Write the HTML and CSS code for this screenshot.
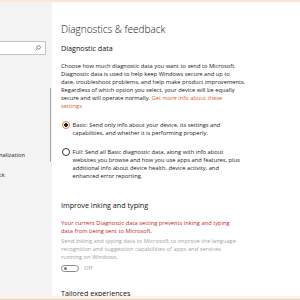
FILE: index.html
```html
<!DOCTYPE html>
<html lang="en">
<head>
    <meta charset="UTF-8">
    <title>Diagnostics &amp; feedback</title>
    <link rel="stylesheet" href="styles.css">
</head>
<body>
    <div class="topbar"></div>
    <div class="window">
        <div class="sidebar">
            <div class="search">
                <svg width="6" height="6" viewBox="0 0 10 10">
                    <circle cx="6" cy="4" r="3" fill="none" stroke="#666" stroke-width="1.2"/>
                    <line x1="3.8" y1="6.2" x2="0.8" y2="9.2" stroke="#666" stroke-width="1.2"/>
                </svg>
            </div>
            <div class="nav">
                <div class="nav-item">nalization</div>
                <div class="nav-item">ck</div>
            </div>
            <div class="scroll"></div>
        </div>

        <div class="content">
            <h1>Diagnostics &amp; feedback</h1>
            <h2>Diagnostic data</h2>
            <p class="desc">Choose how much diagnostic data you want to send to Microsoft.<br>
                Diagnostic data is used to help keep Windows secure and up to<br>
                date, troubleshoot problems, and help make product improvements.<br>
                Regardless of which option you select, your device will be equally<br>
                secure and will operate normally. <a href="#">Get more info about these<br>settings</a></p>

            <label class="radio basic">
                <span class="dot checked"></span>
                <span>Basic: Send only info about your device, its settings and<br>
                    capabilities, and whether it is performing properly.</span>
            </label>
            <label class="radio">
                <span class="dot"></span>
                <span>Full: Send all Basic diagnostic data, along with info about<br>
                    websites you browse and how you use apps and features, plus<br>
                    additional info about device health, device activity, and<br>
                    enhanced error reporting.</span>
            </label>

            <h3>Improve inking and typing</h3>
            <p class="warn">Your current Diagnostic data setting prevents inking and typing<br>
                data from being sent to Microsoft.</p>
            <p class="muted">Send inking and typing data to Microsoft to improve the language<br>
                recognition and suggestion capabilities of apps and services<br>
                running on Windows.</p>
            <div class="toggle-row">
                <span class="toggle"><span class="knob"></span></span>
                <span>Off</span>
            </div>

            <h3 class="last">Tailored experiences</h3>
        </div>
    </div>
    <div class="bottombar"></div>
</body>
</html>
```

FILE: styles.css
```css
* {
    margin: 0;
    padding: 0;
    box-sizing: border-box;
    font-family: 'Open Sans', sans-serif;
}

body {
    width: 300px;
    height: 300px;
    overflow: hidden;
    background: white;
    display: flex;
    flex-direction: column;
}

.topbar {
    height: 2px;
    flex: none;
    background: #fbe6da;
}

.bottombar {
    height: 4px;
    flex: none;
    background: #fdf1e6;
    border-bottom: 1px solid #e6d2c0;
}

.window {
    flex: 1;
    display: flex;
    overflow: hidden;
}

.sidebar {
    width: 52px;
    flex: none;
    background: #f3f3f3;
    position: relative;
}

.search {
    margin-top: 39px;
    width: 46px;
    height: 14px;
    border: 1px solid #c4c4c4;
    border-left: none;
    background: white;
    display: flex;
    align-items: center;
    justify-content: flex-end;
    padding-right: 4px;
}

.nav {
    margin-top: 96px;
}

.nav-item {
    font-size: 5.75px;
    line-height: 8px;
    color: #222;
    height: 20px;
    margin-left: -1px;
}

.scroll {
    position: absolute;
    left: 50px;
    top: 86px;
    width: 1px;
    height: 74px;
    background: #a8a8a8;
}

.content {
    flex: 1;
    padding: 20px 0 0 9px;
}

h1 {
    font-weight: 300;
    font-size: 10px;
    line-height: 14px;
    color: #111;
    margin-bottom: 7px;
}

h2, h3 {
    font-weight: 400;
    font-size: 7.2px;
    line-height: 10px;
    color: #111;
}

h2 {
    margin-bottom: 9px;
}

.desc, .radio, .warn, .muted {
    font-size: 5.75px;
    line-height: 8px;
    white-space: nowrap;
}

.desc {
    color: #1a1a1a;
}

.desc a {
    color: #d9622b;
    text-decoration: none;
}

.radio {
    display: flex;
    gap: 2.5px;
    color: #1a1a1a;
    margin-top: 11px;
    padding-left: 1px;
}

.dot {
    flex: none;
    width: 8px;
    height: 8px;
    border: 1px solid #333;
    border-radius: 50%;
}

.dot.checked {
    border: 1px solid #e07a50;
    background: radial-gradient(circle, #222 0 1.6px, white 2.1px);
}

h3 {
    margin-top: 20px;
    margin-bottom: 9px;
}

.warn {
    color: #c1272d;
}

.muted {
    color: #a3a3a3;
    margin-top: 2px;
}

.toggle-row {
    display: flex;
    align-items: center;
    gap: 5px;
    font-size: 5.75px;
    color: #a3a3a3;
    margin-top: 3px;
    height: 8px;
}

.toggle {
    width: 18px;
    height: 7px;
    border: 1px solid #8a8a8a;
    border-radius: 4px;
    display: flex;
    align-items: center;
    padding-left: 2px;
}

.knob {
    width: 3px;
    height: 3px;
    border-radius: 50%;
    background: #777;
}

h3.last {
    margin-top: 16px;
}
```
